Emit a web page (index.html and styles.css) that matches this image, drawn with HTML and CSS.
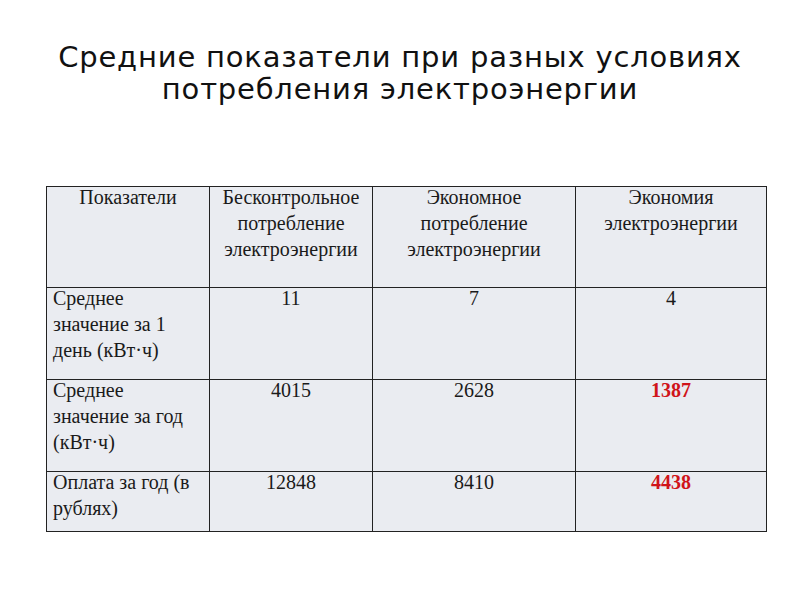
FILE: index.html
```html
<!DOCTYPE html>
<html lang="ru">
<head>
<meta charset="utf-8">
<link rel="stylesheet" href="styles.css">
</head>
<body>
<div class="slide">
  <h1 class="title">Средние показатели при разных условиях<br>потребления электроэнергии</h1>
  <table class="data">
    <colgroup>
      <col class="c1"><col class="c2"><col class="c3"><col class="c4">
    </colgroup>
    <tr class="r-head">
      <td class="center"><div class="cell">Показатели</div></td>
      <td class="center"><div class="cell">Бесконтрольное<br>потребление<br>электроэнергии</div></td>
      <td class="center"><div class="cell">Экономное<br>потребление<br>электроэнергии</div></td>
      <td class="center"><div class="cell">Экономия<br>электроэнергии</div></td>
    </tr>
    <tr class="r-mid">
      <td><div class="cell">Среднее<br>значение за 1<br>день (кВт·ч)</div></td>
      <td class="center"><div class="cell">11</div></td>
      <td class="center"><div class="cell">7</div></td>
      <td class="center"><div class="cell">4</div></td>
    </tr>
    <tr class="r-mid">
      <td><div class="cell">Среднее<br>значение за год<br>(кВт·ч)</div></td>
      <td class="center"><div class="cell">4015</div></td>
      <td class="center"><div class="cell">2628</div></td>
      <td class="center red"><div class="cell">1387</div></td>
    </tr>
    <tr class="r-last">
      <td><div class="cell">Оплата за год (в<br>рублях)</div></td>
      <td class="center"><div class="cell">12848</div></td>
      <td class="center"><div class="cell">8410</div></td>
      <td class="center red"><div class="cell">4438</div></td>
    </tr>
  </table>
</div>
</body>
</html>
```
FILE: styles.css
```css
html, body {
  margin: 0;
  padding: 0;
  background: #ffffff;
}
.slide {
  width: 800px;
  height: 600px;
  display: flex;
  flex-direction: column;
  align-items: center;
}
.title {
  margin: 41px 0 0 0;
  font-family: "DejaVu Sans", sans-serif;
  font-weight: normal;
  font-size: 29px;
  line-height: 32px;
  text-align: center;
  color: #111;
  letter-spacing: 0.8px;
  white-space: nowrap;
}
.data {
  margin-top: 81px;
  margin-left: 13px;
  width: 720px;
  table-layout: fixed;
  border-collapse: collapse;
  font-family: "Liberation Serif", serif;
  font-size: 20px;
  line-height: 26px;
  color: #1a1a1a;
}
.c1 { width: 163px; }
.c2 { width: 163px; }
.c3 { width: 203px; }
.c4 { width: 191px; }
.data td {
  border: 1px solid #222;
  background: #eaecf1;
  vertical-align: top;
  padding: 0 4px 0 6px;
  text-align: left;
  white-space: nowrap;
}
.data td.center { text-align: center; padding: 0 2px; }
.cell { margin-top: -3px; }
.r-head td { height: 100px; }
.r-mid td { height: 91px; }
.r-last td { height: 59px; }
.red {
  color: #d0141a;
  font-weight: bold;
}
```
